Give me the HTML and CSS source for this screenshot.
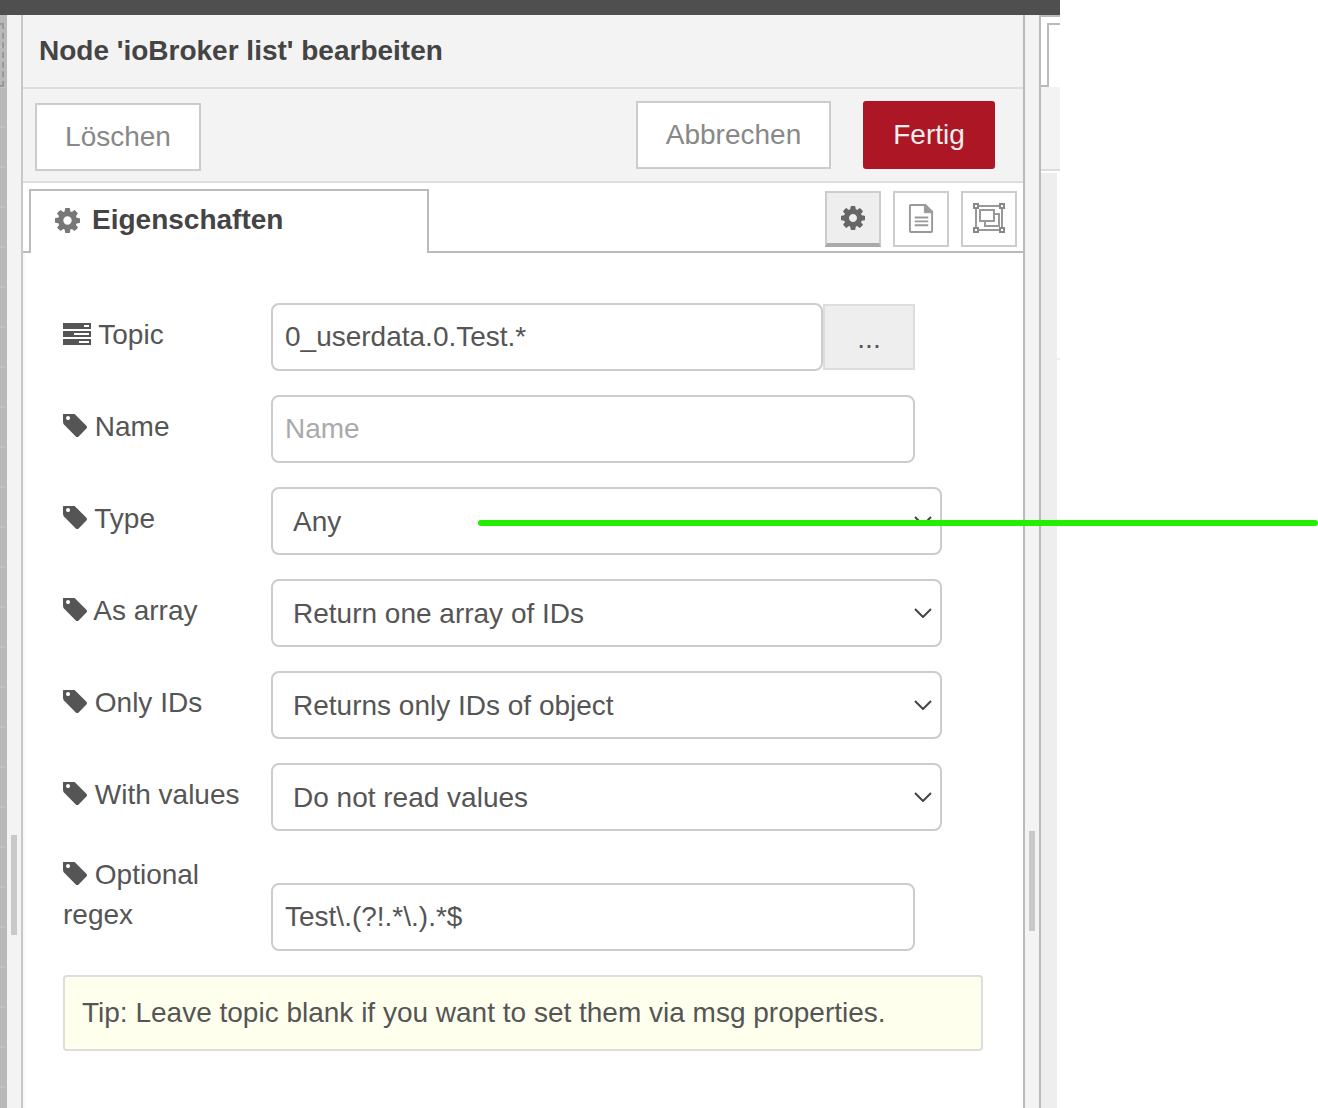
FILE: index.html
```html
<!DOCTYPE html>
<html lang="de">
<head>
    <meta charset="UTF-8">
    <title>Node bearbeiten</title>
    <link rel="stylesheet" href="styles.css">
</head>
<body>
    <div class="fenster">
        <div class="topbar"></div>
        <div class="spalten">
            <div class="links">
                <div class="links-canvas"><span class="dashed"></span></div>
                <div class="links-rand"><span class="scroll scroll-links"></span></div>
            </div>

            <div class="dialog">
                <div class="titel">Node 'ioBroker list' bearbeiten</div>

                <div class="aktionen">
                    <button class="btn btn-del">Löschen</button>
                    <div class="aktionen-rechts">
                        <button class="btn btn-cancel">Abbrechen</button>
                        <button class="btn btn-done">Fertig</button>
                    </div>
                </div>

                <div class="tabs">
                    <div class="tab">
                        <svg class="tab-icon" viewBox="128 128 1536 1536"><use href="#gear"/></svg>
                        <span>Eigenschaften</span>
                    </div>
                    <div class="tools">
                        <div class="tool tool-active">
                            <svg class="tool-gear" viewBox="0 0 1792 1792"><use href="#gear"/></svg>
                        </div>
                        <div class="tool">
                            <svg class="tool-svg" viewBox="0 0 28 32">
                                <path d="M3 2h15l7 7v20a1 1 0 0 1-1 1H3a1 1 0 0 1-1-1V3a1 1 0 0 1 1-1z" fill="none" stroke="#999" stroke-width="2"/>
                                <path d="M17 2v8h8" fill="#999" stroke="#999" stroke-width="1"/>
                                <path d="M7 15h14M7 19h14M7 23h14" stroke="#999" stroke-width="2"/>
                            </svg>
                        </div>
                        <div class="tool">
                            <svg class="tool-svg tool-frame" viewBox="0 0 32 30">
                                <path d="M3 3h26v24H3z" fill="none" stroke="#999" stroke-width="2"/>
                                <path d="M7 7h14v11H7z" fill="none" stroke="#999" stroke-width="2"/>
                                <path d="M12 18v5h14V11h-5" fill="none" stroke="#999" stroke-width="2"/>
                                <path d="M1 1h4v4H1zM27 1h4v4h-4zM1 25h4v4H1zM27 25h4v4h-4z" fill="#fff" stroke="#888" stroke-width="2"/>
                            </svg>
                        </div>
                    </div>
                </div>

                <div class="formular">
                    <div class="zeile">
                        <label>
                            <svg class="ico-tasks" viewBox="0 0 28 22">
                                <path d="M0 0h28v6H0zM0 8h28v6H0zM0 16h28v6H0z" fill="#555"/>
                                <path d="M21 2h5v2h-5zM11 10h15v2H11zM16 18h10v2H16z" fill="#fff"/>
                            </svg>
                            Topic
                        </label>
                        <input class="feld feld-topic" type="text" value="0_userdata.0.Test.*">
                        <button class="btn-mehr">...</button>
                    </div>
                    <div class="zeile">
                        <label><svg class="ico-tag" viewBox="128 192 1515 1515"><use href="#tag"/></svg> Name</label>
                        <input class="feld" type="text" placeholder="Name">
                    </div>
                    <div class="zeile">
                        <label><svg class="ico-tag" viewBox="128 192 1515 1515"><use href="#tag"/></svg> Type</label>
                        <div class="auswahl">
                            <select><option>Any</option></select>
                            <svg class="pfeil" viewBox="0 0 18 10"><path d="M1 1l8 8 8-8" fill="none" stroke="#444" stroke-width="2"/></svg>
                        </div>
                    </div>
                    <div class="zeile">
                        <label><svg class="ico-tag" viewBox="128 192 1515 1515"><use href="#tag"/></svg> As array</label>
                        <div class="auswahl">
                            <select><option>Return one array of IDs</option></select>
                            <svg class="pfeil" viewBox="0 0 18 10"><path d="M1 1l8 8 8-8" fill="none" stroke="#444" stroke-width="2"/></svg>
                        </div>
                    </div>
                    <div class="zeile">
                        <label><svg class="ico-tag" viewBox="128 192 1515 1515"><use href="#tag"/></svg> Only IDs</label>
                        <div class="auswahl">
                            <select><option>Returns only IDs of object</option></select>
                            <svg class="pfeil" viewBox="0 0 18 10"><path d="M1 1l8 8 8-8" fill="none" stroke="#444" stroke-width="2"/></svg>
                        </div>
                    </div>
                    <div class="zeile">
                        <label><svg class="ico-tag" viewBox="128 192 1515 1515"><use href="#tag"/></svg> With values</label>
                        <div class="auswahl">
                            <select><option>Do not read values</option></select>
                            <svg class="pfeil" viewBox="0 0 18 10"><path d="M1 1l8 8 8-8" fill="none" stroke="#444" stroke-width="2"/></svg>
                        </div>
                    </div>
                    <div class="zeile">
                        <label><svg class="ico-tag" viewBox="128 192 1515 1515"><use href="#tag"/></svg> Optional regex</label>
                        <input class="feld" type="text" value="Test\.(?!.*\.).*$">
                    </div>
                    <div class="tipp">Tip: Leave topic blank if you want to set them via msg properties.</div>
                </div>
            </div>

            <div class="rechts">
                <div class="rechts-rand"><span class="scroll scroll-rechts"></span></div>
                <div class="seite">
                    <div class="seite-tabs"><span class="seite-tab"></span></div>
                    <div class="seite-kopf"></div>
                    <div class="seite-inhalt"><span class="seite-strich"></span></div>
                </div>
            </div>
        </div>
    </div>

    <!-- gruene Markierung liegt ueber allem -->
    <div class="marker"></div>

    <svg class="defs" width="0" height="0">
        <defs>
            <path id="gear" d="M1152 896q0-106-75-181t-181-75-181 75-75 181 75 181 181 75 181-75 75-181zm512-109v222q0 12-8 23t-20 13l-185 28q-19 54-39 91 35 50 107 138 10 12 10 25t-9 23q-27 37-99 108t-94 71q-12 0-26-9l-138-108q-44 23-91 38-16 136-29 186-7 28-36 28h-222q-14 0-24.5-8.5t-11.5-21.5l-28-184q-49-16-90-37l-141 107q-10 9-25 9-14 0-25-11-126-114-165-168-7-10-7-23 0-12 8-23 15-21 51-66.5t54-70.5q-27-50-41-99l-183-27q-13-2-21-12.5t-8-23.5v-222q0-12 8-23t19-13l186-28q14-46 39-92-40-57-107-138-10-12-10-24 0-10 9-23 26-36 98.5-107.5t94.5-71.5q13 0 26 10l138 107q44-23 91-38 16-136 29-186 7-28 36-28h222q14 0 24.5 8.5t11.5 21.5l28 184q49 16 90 37l142-107q9-9 24-9 13 0 25 10 129 119 165 170 7 8 7 22 0 12-8 23-15 21-51 66.5t-54 70.5q26 50 41 98l183 28q13 2 21 12.5t8 23.5z"/>
            <path id="tag" d="M576 448q0-53-37.5-90.5t-90.5-37.5-90.5 37.5-37.5 90.5 37.5 90.5 90.5 37.5 90.5-37.5 37.5-90.5zm1067 576q0 53-37 90l-491 492q-39 37-91 37-53 0-90-37l-715-716q-38-37-64.5-101t-26.5-117v-416q0-52 38-90t90-38h416q53 0 117 26.5t102 64.5l715 714q37 39 37 91z"/>
        </defs>
    </svg>
</body>
</html>
```

FILE: styles.css
```css
* {
    box-sizing: border-box;
}
html, body {
    height: 100%;
}
body {
    margin: 0;
    background: #fff;
    font-family: "Liberation Sans", Arial, sans-serif;
    font-size: 28px;
    color: #555;
    position: relative;
    overflow: hidden;
}
.fenster {
    width: 1060px;
    height: 100%;
    display: flex;
    flex-direction: column;
}
.topbar {
    height: 15px;
    flex: none;
    background: #4f4f4f;
}
.spalten {
    flex: 1;
    display: flex;
    min-height: 0;
}

/* linke Seite */
.links {
    width: 23px;
    flex: none;
    display: flex;
}
.links-canvas {
    width: 7px;
    position: relative;
    overflow: hidden;
    background-color: #b9b9b9;
    background-image: repeating-linear-gradient(180deg, transparent 0, transparent 31px, #c2c2c2 31px, #c2c2c2 33px, transparent 33px, transparent 40px);
    background-size: 5px 100%;
    background-repeat: no-repeat;
}
.dashed {
    position: absolute;
    left: -8px;
    top: 8px;
    width: 12px;
    height: 64px;
    border: 2px dashed #999;
}
.links-rand {
    flex: 1;
    position: relative;
    background: #f3f3f3;
    border-right: 2px solid #c8c8c8;
}
.scroll {
    position: absolute;
    width: 6px;
    height: 100px;
    background: #c8c8c8;
}
.scroll-links {
    left: 4px;
    top: 820px;
}

/* Dialog */
.dialog {
    width: 1000px;
    flex: none;
    background: #fff;
    color: #555;
}
.titel {
    height: 74px;
    padding: 15px 16px 0;
    background: #f3f3f3;
    border-bottom: 2px solid #ddd;
    font-size: 28px;
    line-height: 42px;
    font-weight: bold;
    color: #444;
}
.aktionen {
    height: 94px;
    padding: 12px 28px 0 12px;
    background: #f3f3f3;
    border-bottom: 2px solid #ddd;
    display: flex;
    justify-content: space-between;
    align-items: flex-start;
}
.aktionen-rechts {
    display: flex;
    gap: 32px;
}
.btn {
    height: 68px;
    font-family: inherit;
    font-size: 28px;
    border: 2px solid #ccc;
    background: #fff;
    color: #888;
    padding: 0;
}
.btn-del {
    width: 166px;
    margin-top: 2px;
}
.btn-cancel {
    width: 195px;
}
.btn-done {
    width: 132px;
    background: #ad1625;
    border-color: #ad1625;
    border-radius: 3px;
    color: #eee;
}

.tabs {
    height: 70px;
    padding: 6px 6px 0;
    border-bottom: 2px solid #bbb;
    display: flex;
    justify-content: space-between;
    align-items: flex-start;
}
.tab {
    width: 400px;
    height: 64px;
    padding-left: 24px;
    display: flex;
    align-items: center;
    gap: 12px;
    background: #fff;
    border: 2px solid #bbb;
    border-bottom: none;
    font-weight: bold;
    color: #444;
}
.tab span {
    padding-bottom: 4px;
}
.tab-icon {
    width: 25px;
    height: 25px;
    fill: #777;
    margin-bottom: 3px;
}
.tools {
    display: flex;
    gap: 12px;
    padding-top: 2px;
}
.tool {
    width: 56px;
    height: 56px;
    border: 2px solid #ccc;
    display: flex;
    align-items: center;
    justify-content: center;
}
.tool-active {
    background: #eee;
    border-bottom: 4px solid #aaa;
}
.tool-gear {
    width: 28px;
    height: 28px;
    fill: #666;
}
.tool-svg {
    width: 27px;
    height: 31px;
    margin-bottom: 2px;
}
.tool-frame {
    width: 32px;
    height: 30px;
}

/* Formular */
.formular {
    padding: 50px 40px 0;
    height: 855px;
    box-shadow: inset 5px 0 4px -4px rgba(0, 0, 0, 0.06);
}
.zeile {
    display: flex;
    align-items: flex-end;
    margin-bottom: 24px;
}
.zeile label {
    width: 208px;
    flex: none;
    padding-bottom: 16px;
    line-height: 40px;
}
.ico-tag {
    width: 24px;
    height: 24px;
    fill: #555;
    vertical-align: -2px;
}
.ico-tasks {
    width: 28px;
    height: 22px;
    vertical-align: -1px;
}
.feld {
    width: 644px;
    height: 68px;
    padding: 0 12px;
    font-family: inherit;
    font-size: 28px;
    color: #555;
    background: #fff;
    border: 2px solid #ccc;
    border-radius: 8px;
    outline: none;
}
.feld::placeholder {
    color: #aaa;
}
.feld-topic {
    width: 552px;
}
.btn-mehr {
    width: 92px;
    height: 66px;
    margin-bottom: 1px;
    padding: 4px 0 0;
    font-family: inherit;
    font-size: 28px;
    color: #555;
    background: #eee;
    border: 2px solid #ddd;
}
.auswahl {
    position: relative;
    width: 671px;
    height: 68px;
}
.auswahl select {
    width: 100%;
    height: 100%;
    appearance: none;
    padding: 0 40px 0 20px;
    font-family: inherit;
    font-size: 28px;
    color: #555;
    background: #fff;
    border: 2px solid #ccc;
    border-radius: 8px;
    outline: none;
}
.pfeil {
    position: absolute;
    right: 10px;
    top: 29px;
    width: 18px;
    height: 10px;
}
.tipp {
    width: 920px;
    height: 76px;
    padding: 16px 17px;
    line-height: 40px;
    background: #ffe;
    border: 2px solid #ddd;
    border-radius: 4px;
}

/* rechte Seite */
.rechts {
    flex: 1;
    display: flex;
    min-width: 0;
}
.rechts-rand {
    width: 18px;
    flex: none;
    position: relative;
    background: #f3f3f3;
    border-left: 2px solid #bbb;
    border-right: 2px solid #bbb;
}
.scroll-rechts {
    left: 4px;
    top: 816px;
}
.seite {
    flex: 1;
    background: #fff;
    display: flex;
    flex-direction: column;
}
.seite-tabs {
    height: 72px;
    padding: 6px 0 0 6px;
    border-top: 2px solid #bbb;
    background: linear-gradient(#bbb, #bbb) left bottom / 6px 2px no-repeat;
}
.seite-tab {
    display: block;
    height: 64px;
    border-top: 2px solid #bbb;
    border-left: 2px solid #bbb;
    background: #fff;
}
.seite-kopf {
    height: 84px;
    background: #f3f3f3;
    border-bottom: 2px solid #ddd;
}
.seite-inhalt {
    flex: 1;
    margin-top: 2px;
    position: relative;
    width: 16px;
    background: #eee;
}
.seite-strich {
    position: absolute;
    left: 16px;
    top: 185px;
    width: 3px;
    height: 2px;
    background: #eee;
}

.marker {
    position: absolute;
    left: 478px;
    top: 520px;
    width: 840px;
    height: 6px;
    border-radius: 3px;
    background: #22ee00;
}
.defs {
    position: absolute;
}
```
